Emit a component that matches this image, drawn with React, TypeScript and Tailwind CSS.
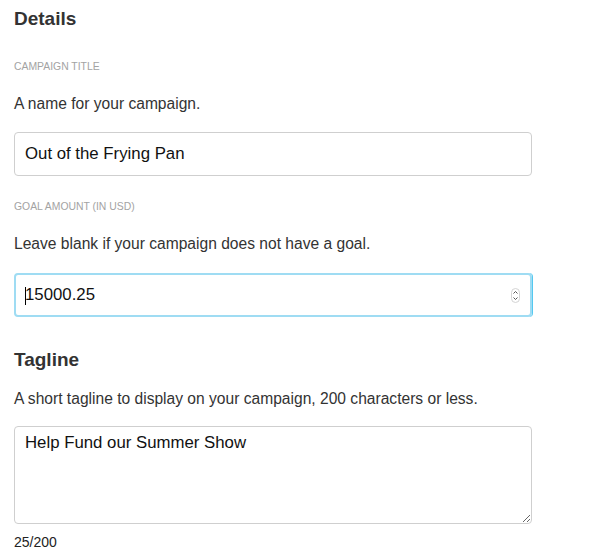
import { useState } from 'react';

const sans = "font-['Liberation_Sans',Arial,sans-serif]";

function Label({ children, className = '' }: { children: React.ReactNode; className?: string }) {
    return (
        <div className={`text-[10.4px] leading-[14px] uppercase text-[#a3a3a3] ${className}`}>
            {children}
        </div>
    );
}

export default function App() {
    const [title, setTitle] = useState('Out of the Frying Pan');
    const [goal, setGoal] = useState('15000.25');
    const [tagline, setTagline] = useState('Help Fund our Summer Show');

    return (
        <div className={`w-[600px] h-[560px] bg-white px-[14px] pt-[7px] ${sans} text-[#333]`}>
            <div className="w-[518px]">
                {/* Details */}
                <h2 className="text-[19px] leading-[24px] font-bold text-[#333]">Details</h2>

                <Label className="mt-[29px]">Campaign Title</Label>
                <p className="mt-[20px] text-[15.6px] leading-[20px]">A name for your campaign.</p>
                <input
                    value={title}
                    onChange={e => setTitle(e.target.value)}
                    className="mt-[18px] block w-full h-[44px] rounded-[4px] border border-[#cfcfcf] px-[10px] text-[16.8px] text-[#111] outline-none"
                />

                <Label className="mt-[24px]">Goal Amount (in USD)</Label>
                <p className="mt-[20px] text-[15.6px] leading-[20px]">Leave blank if your campaign does not have a goal.</p>
                <div className="relative mt-[19px] h-[44px] rounded-[4px] border-2 border-[#9fdcf3] shadow-[1px_0_0_#54c8f0]">
                    <span className="absolute left-[9px] top-[12px] h-[18px] w-px bg-black" />
                    <input
                        value={goal}
                        onChange={e => setGoal(e.target.value)}
                        className="w-full h-full bg-transparent px-[9px] text-[16.8px] text-[#111] outline-none"
                    />
                    <div className="absolute right-[10px] top-[13px] w-[9px] h-[15px] rounded-full border border-[#d4d4d4] flex flex-col items-center justify-center">
                        <svg width="5" height="11" viewBox="0 0 5 11" fill="none" stroke="#555" strokeWidth="1">
                            <path d="M0.5 3.5 L2.5 1.5 L4.5 3.5" />
                            <path d="M0.5 7.5 L2.5 9.5 L4.5 7.5" />
                        </svg>
                    </div>
                </div>

                {/* Tagline */}
                <h2 className="mt-[31px] text-[19px] leading-[24px] font-bold text-[#333]">Tagline</h2>
                <p className="mt-[17px] text-[15.6px] leading-[20px]">
                    A short tagline to display on your campaign, 200 characters or less.
                </p>
                <textarea
                    value={tagline}
                    onChange={e => setTagline(e.target.value)}
                    className="mt-[17px] block w-full h-[98px] rounded-[4px] border border-[#cfcfcf] px-[10px] py-[6px] text-[16.8px] leading-[20px] text-[#111] outline-none"
                />
                <div className="mt-[9px] text-[14px] leading-[18px] text-[#222]">{tagline.length}/200</div>
            </div>
        </div>
    );
}
